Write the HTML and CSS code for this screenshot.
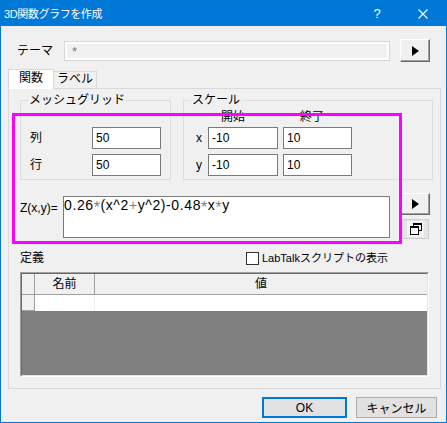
FILE: index.html
```html
<!DOCTYPE html>
<html lang="ja">
<head>
    <meta charset="UTF-8">
    <meta name="viewport" content="width=device-width, initial-scale=1.0">
    <title>3D関数グラフを作成</title>
    <link rel="stylesheet" href="styles.css">
</head>
<body>

    <div class="dialog">
        <div class="titlebar">
            <span class="title">3D関数グラフを作成</span>
            <span class="tb-btn">?</span>
            <span class="tb-btn">
                <svg width="10" height="10" viewBox="0 0 10 10">
                    <path d="M0.5 0.5 L9.5 9.5 M9.5 0.5 L0.5 9.5" stroke="#fff" stroke-width="1.1"/>
                </svg>
            </span>
        </div>

        <div class="theme-row">
            <span class="theme-label">テーマ</span>
            <div class="theme-input">*</div>
            <button class="arrow-btn"><span class="tri"></span></button>
        </div>

        <div class="tabs">
            <div class="tab active">関数</div>
            <div class="tab">ラベル</div>
        </div>

        <div class="panel">
            <div class="groups">
                <div class="group mesh">
                    <div class="group-title">メッシュグリッド</div>
                    <div class="mesh-rows">
                        <div class="field-row">
                            <span class="mesh-label">列</span>
                            <div class="edit">50</div>
                        </div>
                        <div class="field-row">
                            <span class="mesh-label">行</span>
                            <div class="edit">50</div>
                        </div>
                    </div>
                </div>

                <div class="group scale">
                    <div class="group-title">スケール</div>
                    <div class="scale-head">
                        <span class="h-start">開始</span>
                        <span class="h-end">終了</span>
                    </div>
                    <div class="scale-rows">
                        <div class="field-row">
                            <span class="axis">x</span>
                            <div class="edit">-10</div>
                            <div class="edit">10</div>
                        </div>
                        <div class="field-row">
                            <span class="axis">y</span>
                            <div class="edit">-10</div>
                            <div class="edit">10</div>
                        </div>
                    </div>
                </div>
            </div>

            <div class="z-row">
                <span class="z-label">Z(x,y)=</span>
                <div class="z-edit">0.26<span class="op star">*</span>(x^2<span class="op">+</span>y^2)-0.48<span class="op star">*</span>x<span class="op star">*</span>y</div>
                <div class="z-btns">
                    <button class="arrow-btn z-arrow"><span class="tri"></span></button>
                    <button class="icon-btn">
                        <span class="icon-face">
                            <svg width="12" height="12" viewBox="0 0 12 12">
                                <rect x="3.5" y="0.5" width="8" height="7" fill="none" stroke="#000"/>
                                <rect x="3" y="0" width="9" height="2" fill="#000"/>
                                <rect x="0.5" y="3.5" width="8" height="8" fill="#fff" stroke="#000"/>
                                <rect x="0" y="3" width="9" height="2" fill="#000"/>
                            </svg>
                        </span>
                    </button>
                </div>
            </div>

            <div class="def-row">
                <span class="def-label">定義</span>
                <label class="check"><span class="box"></span>LabTalkスクリプトの表示</label>
            </div>

            <div class="defgrid">
                <div class="defgrid-inner">
                    <div class="cell corner"></div>
                    <div class="cell head">名前</div>
                    <div class="cell head last">値</div>
                    <div class="cell rowhead"></div>
                    <div class="cell data"></div>
                    <div class="cell data last"></div>
                </div>
            </div>
        </div>

        <div class="footer">
            <button class="btn default">OK</button>
            <button class="btn">キャンセル</button>
        </div>

        <div class="highlight"></div>
    </div>

</body>
</html>
```

FILE: styles.css
```css
/* Global Styles */
body {
    margin: 0;
    padding: 0;
    font-family: "Liberation Sans", "Noto Sans CJK JP", sans-serif;
    font-size: 12px;
    line-height: 16px;
    color: #000;
}

button {
    font-family: inherit;
    font-size: 12px;
    padding: 0;
    margin: 0;
}

.dialog {
    position: relative;
    box-sizing: border-box;
    width: 447px;
    height: 423px;
    border: 1px solid #0078d7;
    background: #f0f0f0;
    display: flex;
    flex-direction: column;
}

/* Title bar */
.titlebar {
    height: 25px;
    background: #0078d7;
    color: #fff;
    display: flex;
    align-items: center;
    padding-left: 3px;
}

.title {
    flex: 1;
    font-size: 11px;
    letter-spacing: -0.4px;
}

.tb-btn {
    width: 46px;
    height: 25px;
    display: flex;
    align-items: center;
    justify-content: center;
    font-size: 13px;
}

/* Theme row */
.theme-row {
    margin-top: 13px;
    padding-left: 16px;
    height: 23px;
    display: flex;
    align-items: center;
}

.theme-label {
    width: 47px;
}

.theme-input {
    box-sizing: border-box;
    width: 326px;
    height: 20px;
    border: 1px solid #d6d6d6;
    box-shadow: inset 0 0 0 2px #fff;
    padding-left: 7px;
    line-height: 20px;
    color: #7a7a7a;
    font-size: 13px;
}

.arrow-btn {
    box-sizing: border-box;
    width: 30px;
    height: 23px;
    margin-left: 10px;
    background: #f0f0f0;
    border: 1px solid;
    border-color: #fff #696969 #696969 #fff;
    box-shadow: inset -1px -1px #a0a0a0;
    display: flex;
    align-items: center;
    justify-content: center;
}

.tri {
    width: 0;
    height: 0;
    border-left: 7px solid #000;
    border-top: 5px solid transparent;
    border-bottom: 5px solid transparent;
}

/* Tabs */
.tabs {
    margin-top: 7px;
    margin-left: 7px;
    height: 19px;
    display: flex;
    align-items: flex-end;
}

.tab {
    box-sizing: border-box;
    text-align: center;
    border: 1px solid #d9d9d9;
    border-bottom: none;
}

.tab.active {
    position: relative;
    z-index: 1;
    width: 46px;
    height: 20px;
    margin-bottom: -1px;
    background: #fff;
    line-height: 16px;
}

.tab:not(.active) {
    width: 43px;
    height: 17px;
    border-left: none;
    background: #f0f0f0;
    line-height: 14px;
}

.panel {
    box-sizing: border-box;
    width: 433px;
    height: 301px;
    margin-left: 7px;
    border: 1px solid #d9d9d9;
    padding-left: 11px;
}

/* Group boxes */
.groups {
    margin-top: 11px;
    display: flex;
    gap: 12px;
}

.group {
    box-sizing: border-box;
    height: 80px;
    border: 1px solid #dcdcdc;
}

.mesh {
    width: 151px;
}

.scale {
    width: 250px;
}

.group-title {
    width: fit-content;
    margin: -9px 0 0 7px;
    padding: 0 1px;
    background: #f0f0f0;
}

.field-row {
    height: 22px;
    display: flex;
    align-items: center;
}

.field-row + .field-row {
    margin-top: 5px;
}

.mesh-rows {
    margin-top: 19px;
    padding-left: 9px;
}

.mesh-label {
    width: 62px;
}

.edit {
    box-sizing: border-box;
    width: 69px;
    height: 22px;
    border: 1px solid #7a7a7a;
    background: #fff;
    padding-left: 3px;
    line-height: 20px;
}

.scale-head {
    margin-top: 1px;
    display: flex;
}

.h-start {
    margin-left: 37px;
}

.h-end {
    margin-left: 55px;
}

.scale-rows {
    margin-top: 2px;
    padding-left: 12px;
}

.axis {
    width: 12px;
}

.scale-rows .edit {
    width: 70px;
}

.scale-rows .edit + .edit {
    margin-left: 5px;
    width: 69px;
}

/* Formula row */
.z-row {
    margin-top: 13px;
    display: flex;
    align-items: flex-start;
}

.z-label {
    width: 43px;
    margin-top: 7px;
}

.z-edit {
    box-sizing: border-box;
    width: 327px;
    height: 42px;
    margin-top: 3px;
    border: 1px solid #7a7a7a;
    background: #fff;
    font-size: 14px;
    line-height: 17px;
    letter-spacing: 0.6px;
    white-space: nowrap;
}

.op {
    color: #808080;
}

.op.star {
    font-size: 16px;
    vertical-align: -3px;
    line-height: 10px;
}

.z-btns {
    display: flex;
    flex-direction: column;
}

.z-arrow {
    height: 22px;
}

.icon-btn {
    box-sizing: border-box;
    width: 27px;
    height: 20px;
    margin: 4px 0 0 12px;
    background: #e5e5e5;
    border: 1px solid #d0d0d0;
    display: flex;
    align-items: center;
    justify-content: center;
}

.icon-face {
    width: 17px;
    height: 16px;
    background: #f4f4f4;
    display: flex;
    align-items: center;
    justify-content: center;
}

/* Definitions */
.def-row {
    margin-top: 11px;
    height: 16px;
    display: flex;
    align-items: center;
}

.def-label {
    width: 226px;
}

.check {
    display: flex;
    align-items: center;
    font-size: 11px;
}

.box {
    box-sizing: border-box;
    width: 13px;
    height: 13px;
    border: 1px solid #333;
    background: #fff;
    margin-right: 3px;
}

.defgrid {
    box-sizing: border-box;
    width: 409px;
    height: 105px;
    margin-top: 6px;
    border: 1px solid;
    border-color: #a0a0a0 #fff #fff #a0a0a0;
}

.defgrid-inner {
    box-sizing: border-box;
    height: 100%;
    border: 1px solid;
    border-color: #696969 #e3e3e3 #e3e3e3 #696969;
    background: #808080;
    display: grid;
    grid-template-columns: 13px 60px 1fr;
    grid-template-rows: 21px 16px;
}

.cell {
    box-sizing: border-box;
}

.corner,
.head {
    background: #f0f0f0;
    border-right: 1px solid #a0a0a0;
    border-bottom: 1px solid #a0a0a0;
    text-align: center;
    line-height: 20px;
}

.head.last {
    border-right: none;
}

.rowhead {
    background: #f0f0f0;
    border-right: 1px solid #a0a0a0;
    border-bottom: 1px solid #a0a0a0;
}

.data {
    background: #fff;
    border-right: 1px solid #f0f0f0;
}

.data.last {
    border-right: none;
}

/* Footer buttons */
.footer {
    margin-top: 8px;
    padding-right: 9px;
    display: flex;
    justify-content: flex-end;
    gap: 9px;
}

.btn {
    box-sizing: border-box;
    height: 21px;
    width: 81px;
    background: #e1e1e1;
    border: 1px solid #adadad;
}

.btn.default {
    width: 85px;
    border: 2px solid #0078d7;
}

/* Marker frame laid over the grid and formula fields */
.highlight {
    position: absolute;
    left: 11px;
    top: 112px;
    box-sizing: border-box;
    width: 390px;
    height: 131px;
    border: 3px solid #ff00ff;
    pointer-events: none;
}
```
